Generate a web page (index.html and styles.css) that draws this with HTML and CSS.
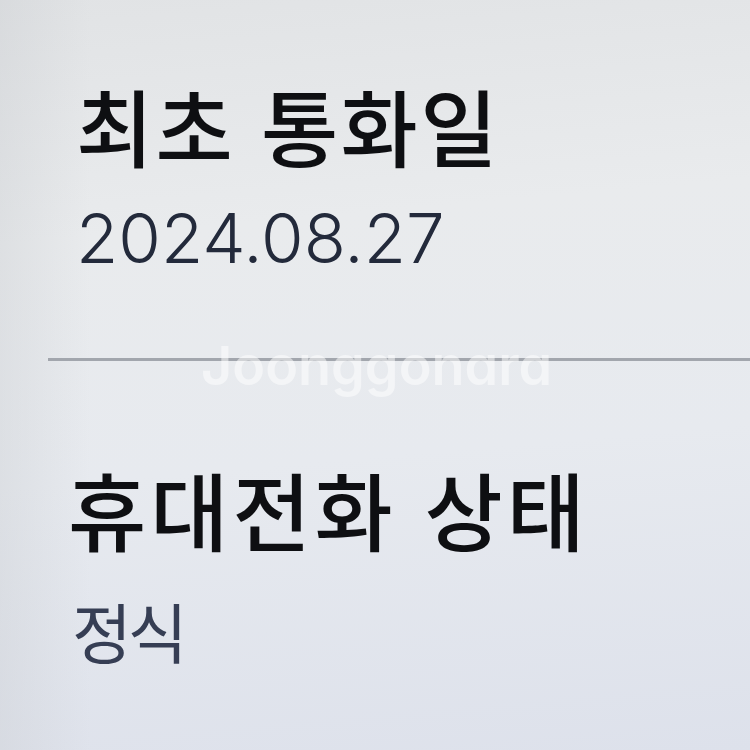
FILE: index.html
```html
<!DOCTYPE html>
<html lang="ko">
<head>
<meta charset="utf-8">
<link rel="stylesheet" href="styles.css">
</head>
<body>
<div class="screen">
  <section class="item item-first">
    <h2 class="label">최초 통화일</h2>
    <p class="value value-date">2024.08.27</p>
  </section>
  <hr class="divider">
  <section class="item item-second">
    <h2 class="label label-second">휴대전화 상태</h2>
    <p class="value value-status">정식</p>
  </section>
  <div class="watermark">Joonggonara</div>
</div>
</body>
</html>
```
FILE: styles.css
```css
html, body {
  margin: 0;
  padding: 0;
}
body {
  width: 750px;
  height: 750px;
  overflow: hidden;
  font-family: "Noto Sans CJK KR", "Noto Sans", sans-serif;
}
.screen {
  position: relative;
  width: 750px;
  height: 750px;
  background:
    linear-gradient(90deg, rgba(200, 203, 207, 0.35) 0%, rgba(200, 203, 207, 0) 12%),
    linear-gradient(175deg, #e1e3e5 0%, #e9ebed 30%, #e7eaef 60%, #dde1eb 100%);
  display: flex;
  flex-direction: column;
}
.item {
  display: flex;
  flex-direction: column;
}
.item-first {
  padding: 83px 0 0 76px;
}
.item-second {
  padding: 104px 0 0 68px;
}
.label {
  margin: 0;
  font-size: 84px;
  line-height: 1;
  font-weight: 500;
  color: #0e0f12;
  letter-spacing: 2.3px;
}
.label-second {
  font-size: 85px;
  letter-spacing: 4px;
}
.value {
  margin: 0;
  line-height: 1;
  font-weight: 400;
}
.value-date {
  margin-top: 37px;
  font-family: "Inter", "Noto Sans", sans-serif;
  font-size: 69px;
  font-weight: 300;
  color: #232a3b;
  letter-spacing: 0;
}
.value-status {
  margin-top: 48px;
  padding-left: 4px;
  font-size: 65px;
  color: #363e54;
  letter-spacing: -4px;
}
.divider {
  margin: 85px 0 0 48px;
  border: none;
  height: 3px;
  background: #a2a6ad;
}
.watermark {
  position: absolute;
  left: 201px;
  top: 339px;
  font-family: "Inter", "Noto Sans", sans-serif;
  font-feature-settings: "cv11";
  font-size: 54px;
  line-height: 1;
  font-weight: 600;
  color: rgba(255, 255, 255, 0.5);
  letter-spacing: 0;
}
```
